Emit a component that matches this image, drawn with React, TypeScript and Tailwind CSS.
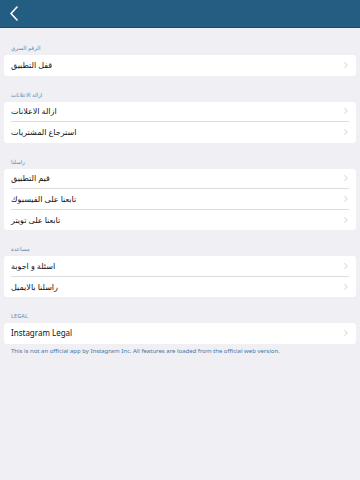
const font = { fontFamily: '"Noto Sans", "Liberation Sans", "DejaVu Sans", sans-serif' };

type Section = { title: string; rows: string[]; footer?: string };

const sections: Section[] = [
  { title: 'الرقم السري', rows: ['قفل التطبيق'] },
  { title: 'ازالة الاعلانات', rows: ['ازالة الاعلانات', 'استرجاع المشتريات'] },
  { title: 'راسلنا', rows: ['قيم التطبيق', 'تابعنا على الفيسبوك', 'تابعنا على تويتر'] },
  { title: 'مساعدة', rows: ['اسئلة و اجوبة', 'راسلنا بالايميل'] },
  {
    title: 'LEGAL',
    rows: ['Instagram Legal'],
    footer: 'This is not an official app by Instagram Inc. All features are loaded from the official web version.',
  },
];

function Chevron() {
  return (
    <svg className="w-[4px] h-[6px] text-[#c4c4c9]" viewBox="0 0 4 6" fill="none" stroke="currentColor">
      <path d="M0.6 0.5 L3.2 3 L0.6 5.5" strokeWidth={0.8} strokeLinecap="round" strokeLinejoin="round" />
    </svg>
  );
}

export default function App() {
  return (
    <div className="w-[360px] h-[480px] bg-[#efeff4] overflow-hidden" style={font}>
      {/* nav bar */}
      <div className="h-[28px] bg-[#245d82] border-b border-[#1c4a69] flex items-center pl-[9px]">
        <svg className="w-[10px] h-[15px]" viewBox="0 0 10 15" fill="none" stroke="white">
          <path d="M8 1 L2 7.5 L8 14" strokeWidth={1.6} strokeLinecap="round" strokeLinejoin="round" />
        </svg>
      </div>

      <div className="px-[4px] pt-[14px]">
        {sections.map((s, i) => (
          <div key={i} className="mb-[13px]">
            <div className="pl-[7px] h-[13px] flex items-center text-[5.5px] text-[#5f87aa] tracking-wide">
              <span dir="auto">{s.title}</span>
            </div>
            <div className="bg-white rounded-[3px]">
              {s.rows.map((r, j) => (
                <div key={j} className="px-[7px]">
                  <div
                    className={
                      'h-[20.5px] flex items-center justify-between pr-[1px] ' +
                      (j < s.rows.length - 1 ? 'border-b border-[#dcdce0]' : '')
                    }
                  >
                    <span className="text-[8px] text-[#111]" dir="auto">{r}</span>
                    <Chevron />
                  </div>
                </div>
              ))}
            </div>
            {s.footer && (
              <div className="pl-[7px] pt-[3px] text-[6px] text-[#3f77a6]">{s.footer}</div>
            )}
          </div>
        ))}
      </div>
    </div>
  );
}
